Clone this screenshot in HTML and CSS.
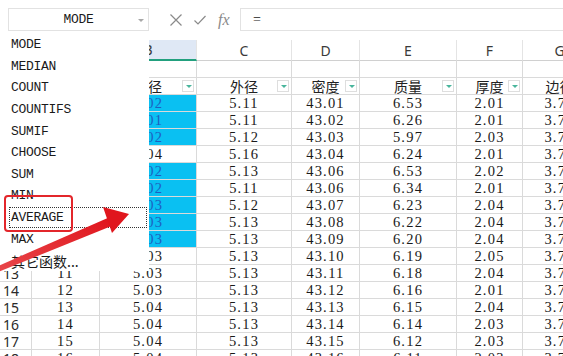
FILE: index.html
```html
<!DOCTYPE html>
<html>
<head>
<meta charset="utf-8">
<link rel="stylesheet" href="styles.css">
</head>
<body>
<div class="app">
  <div class="formula-bar">
    <div class="name-box"><span class="name-text">MODE</span><span class="nb-arrow"></span></div>
    <div class="fb-icons">
      <svg class="ico" width="14" height="14" viewBox="0 0 14 14"><path d="M1.5 1.5 L12.5 12.5 M12.5 1.5 L1.5 12.5" stroke="#8a8a8a" stroke-width="1.2" fill="none"/></svg>
      <svg class="ico" width="14" height="14" viewBox="0 0 14 14"><path d="M1.5 7.5 L5 11 L12.5 3" stroke="#8a8a8a" stroke-width="1.2" fill="none"/></svg>
      <span class="fx">fx</span>
    </div>
    <div class="formula-input">=</div>
  </div>

  <div class="sheet">
    <div class="c hd rh"></div><div class="c hd"></div><div class="c hd sel">B</div><div class="c hd">C</div><div class="c hd">D</div><div class="c hd">E</div><div class="c hd">F</div><div class="c hd">G</div>

    <div class="c rh"></div><div class="c"></div><div class="c"></div><div class="c"></div><div class="c"></div><div class="c"></div><div class="c"></div><div class="c"></div>

    <div class="c rh"></div><div class="c th"></div><div class="c th">直径<span class="flt"></span></div><div class="c th">外径<span class="flt"></span></div><div class="c th">密度<span class="flt"></span></div><div class="c th">质量<span class="flt"></span></div><div class="c th">厚度<span class="flt"></span></div><div class="c th">边径<span class="flt"></span></div>

    <div class="c rh"></div><div class="c"></div><div class="c hl">5.02</div><div class="c">5.11</div><div class="c">43.01</div><div class="c">6.53</div><div class="c">2.01</div><div class="c">3.71</div>
    <div class="c rh"></div><div class="c"></div><div class="c hl">5.01</div><div class="c">5.11</div><div class="c">43.02</div><div class="c">6.26</div><div class="c">2.01</div><div class="c">3.72</div>
    <div class="c rh"></div><div class="c"></div><div class="c hl">5.02</div><div class="c">5.12</div><div class="c">43.03</div><div class="c">5.97</div><div class="c">2.03</div><div class="c">3.71</div>
    <div class="c rh"></div><div class="c"></div><div class="c">5.04</div><div class="c">5.16</div><div class="c">43.04</div><div class="c">6.24</div><div class="c">2.01</div><div class="c">3.72</div>
    <div class="c rh"></div><div class="c"></div><div class="c hl">5.02</div><div class="c">5.13</div><div class="c">43.06</div><div class="c">6.53</div><div class="c">2.02</div><div class="c">3.71</div>
    <div class="c rh"></div><div class="c"></div><div class="c hl">5.02</div><div class="c">5.11</div><div class="c">43.06</div><div class="c">6.34</div><div class="c">2.01</div><div class="c">3.72</div>
    <div class="c rh"></div><div class="c"></div><div class="c hl">5.03</div><div class="c">5.12</div><div class="c">43.07</div><div class="c">6.23</div><div class="c">2.04</div><div class="c">3.71</div>
    <div class="c rh"></div><div class="c"></div><div class="c hl">5.03</div><div class="c">5.13</div><div class="c">43.08</div><div class="c">6.22</div><div class="c">2.04</div><div class="c">3.72</div>
    <div class="c rh"></div><div class="c"></div><div class="c hl">5.03</div><div class="c">5.13</div><div class="c">43.09</div><div class="c">6.20</div><div class="c">2.04</div><div class="c">3.71</div>
    <div class="c rh"></div><div class="c"></div><div class="c">5.03</div><div class="c">5.13</div><div class="c">43.10</div><div class="c">6.19</div><div class="c">2.05</div><div class="c">3.72</div>
    <div class="c rh">13</div><div class="c">11</div><div class="c">5.03</div><div class="c">5.13</div><div class="c">43.11</div><div class="c">6.18</div><div class="c">2.04</div><div class="c">3.71</div>
    <div class="c rh">14</div><div class="c">12</div><div class="c">5.03</div><div class="c">5.13</div><div class="c">43.12</div><div class="c">6.16</div><div class="c">2.01</div><div class="c">3.72</div>
    <div class="c rh">15</div><div class="c">13</div><div class="c">5.04</div><div class="c">5.13</div><div class="c">43.13</div><div class="c">6.15</div><div class="c">2.04</div><div class="c">3.71</div>
    <div class="c rh">16</div><div class="c">14</div><div class="c">5.04</div><div class="c">5.13</div><div class="c">43.14</div><div class="c">6.14</div><div class="c">2.03</div><div class="c">3.72</div>
    <div class="c rh">17</div><div class="c">15</div><div class="c">5.04</div><div class="c">5.13</div><div class="c">43.15</div><div class="c">6.12</div><div class="c">2.03</div><div class="c">3.71</div>
    <div class="c rh">18</div><div class="c">16</div><div class="c">5.04</div><div class="c">5.13</div><div class="c">43.16</div><div class="c">6.11</div><div class="c">2.03</div><div class="c">3.72</div>
  </div>

  <ul class="func-menu">
    <li>MODE</li>
    <li>MEDIAN</li>
    <li>COUNT</li>
    <li>COUNTIFS</li>
    <li>SUMIF</li>
    <li>CHOOSE</li>
    <li>SUM</li>
    <li>MIN</li>
    <li class="focus">AVERAGE</li>
    <li>MAX</li>
    <li class="cjk">其它函数...</li>
  </ul>

  <div class="red-box"></div>

  <svg class="arrow" width="563" height="356" viewBox="0 0 563 356">
    <defs>
      <linearGradient id="ag" x1="0" y1="1" x2="1" y2="0">
        <stop offset="0" stop-color="#e8474a"/>
        <stop offset="1" stop-color="#e0141c"/>
      </linearGradient>
    </defs>
    <polygon points="-2,266 -2,272 114,225 110,217" fill="url(#ag)"/>
    <polygon points="103,207 129,214 112,233" fill="#e0161d"/>
  </svg>
</div>
</body>
</html>
```

FILE: styles.css
```css
* { box-sizing: border-box; }
html, body { margin: 0; padding: 0; }
body {
  width: 563px;
  height: 356px;
  overflow: hidden;
  background: #fff;
  font-family: "Liberation Serif", "Noto Sans CJK SC", serif;
  color: #222;
}
.app {
  position: relative;
  width: 563px;
  height: 356px;
  overflow: hidden;
}

/* formula bar */
.formula-bar {
  display: flex;
  align-items: flex-start;
  height: 40px;
  padding-top: 8px;
  padding-left: 8px;
}
.name-box {
  position: relative;
  width: 141px;
  height: 23px;
  border: 1px solid #e2e2e2;
  display: flex;
  align-items: center;
  justify-content: center;
  font-family: "Liberation Mono", monospace;
  font-size: 13px;
  letter-spacing: -0.3px;
  color: #1a1a1a;
}
.nb-arrow {
  position: absolute;
  right: 4px;
  top: 10px;
  width: 0; height: 0;
  border-left: 3px solid transparent;
  border-right: 3px solid transparent;
  border-top: 3px solid #a8a8a8;
}
.fb-icons {
  display: flex;
  align-items: center;
  height: 23px;
  gap: 10px;
  padding-left: 20px;
  width: 91px;
}
.fx {
  font-family: "Liberation Serif", serif;
  font-style: italic;
  font-size: 16px;
  color: #8a8a8a;
  margin-left: 1px;
}
.formula-input {
  flex: 1;
  height: 23px;
  border: 1px solid #e2e2e2;
  border-right: none;
  padding-left: 12px;
  display: flex;
  align-items: center;
  font-size: 14px;
}

/* sheet */
.sheet {
  display: grid;
  grid-template-columns: 32px 68px 97px 95px 68px 97px 66px 74px;
  grid-template-rows: 21px;
  grid-auto-rows: 17px;
  width: 597px;
}
.c {
  position: relative;
  border-right: 1px solid #dadada;
  border-bottom: 1px solid #dadada;
  display: flex;
  align-items: center;
  justify-content: center;
  font-size: 14.5px;
  line-height: 15px;
  letter-spacing: 1.2px;
  white-space: nowrap;
  overflow: hidden;
  color: #1a1a1a;
}
.c.hd {
  font-family: "Noto Sans", sans-serif;
  font-size: 14px;
  letter-spacing: 0;
  color: #3a3a3a;
  border-right-color: #e4e4e4;
  border-bottom-color: #d0d0d0;
}
.c.hd.sel {
  background: #dfe8f5;
  border-bottom: 2px solid #22a07e;
}
.c.rh {
  justify-content: flex-start;
  padding-left: 3px;
  font-family: "Noto Sans", sans-serif;
  font-size: 14px;
  letter-spacing: 0;
  color: #2a2a2a;
}
.c.th {
  font-family: "Noto Sans CJK SC", sans-serif;
  font-size: 14px;
  letter-spacing: 0;
  color: #222;
}
.flt {
  position: absolute;
  right: 2px;
  top: 2px;
  width: 12px;
  height: 12px;
  border: 1px solid #dedede;
  background: #fff;
}
.flt::after {
  content: "";
  position: absolute;
  left: 3px;
  top: 4px;
  border-left: 3px solid transparent;
  border-right: 3px solid transparent;
  border-top: 3px solid #49b59c;
}
.c.hl {
  background: #0ac0f2;
  color: #1d5fc0;
}

/* function menu */
.func-menu {
  position: absolute;
  left: 0;
  top: 31px;
  width: 149px;
  height: 240px;
  margin: 0;
  padding: 3px 0 0 0;
  list-style: none;
  background: #fff;
}
.func-menu li {
  height: 21.6px;
  margin: 0 2px 0 9px;
  padding-left: 1px;
  border: 1px dotted transparent;
  display: flex;
  align-items: center;
  font-family: "Liberation Mono", monospace;
  font-size: 13px;
  letter-spacing: -0.3px;
  color: #1a1a1a;
}
.func-menu li.focus {
  border-color: #333;
}
.func-menu li.cjk {
  font-family: "Noto Sans CJK SC", sans-serif;
  font-size: 14px;
  letter-spacing: 0;
}

.red-box {
  position: absolute;
  left: 4px;
  top: 195px;
  width: 69px;
  height: 37px;
  border: 2.5px solid #e3262b;
  border-radius: 4px;
}
.arrow {
  position: absolute;
  left: 0;
  top: 0;
  pointer-events: none;
}
```
